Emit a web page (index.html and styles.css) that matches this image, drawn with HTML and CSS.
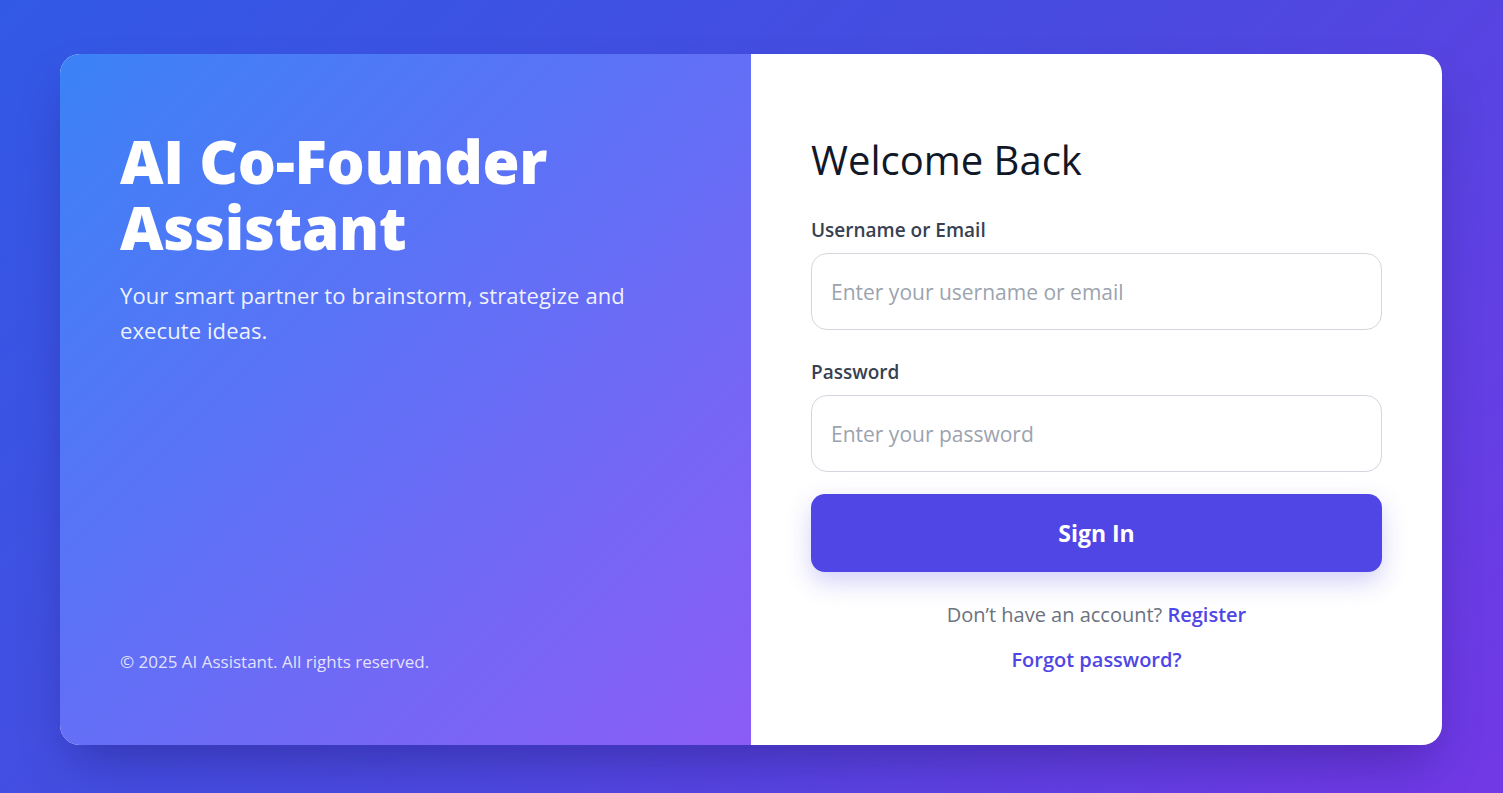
FILE: index.html
```html
<!DOCTYPE html>
<html lang="en">
<head>
<meta charset="utf-8">
<title>AI Co-Founder Assistant</title>
<link rel="stylesheet" href="styles.css">
</head>
<body>
<main class="page">
  <section class="card">
    <div class="hero">
      <div class="hero-top">
        <h1 class="hero-title">AI Co-Founder Assistant</h1>
        <p class="hero-sub">Your smart partner to brainstorm, strategize and execute ideas.</p>
      </div>
      <p class="hero-foot">© 2025 AI Assistant. All rights reserved.</p>
    </div>
    <div class="panel">
      <form class="form">
        <h2 class="form-title">Welcome Back</h2>
        <label class="field">
          <span class="field-label">Username or Email</span>
          <input class="field-input" type="text" placeholder="Enter your username or email">
        </label>
        <label class="field field--last">
          <span class="field-label">Password</span>
          <input class="field-input" type="password" placeholder="Enter your password">
        </label>
        <button class="btn" type="button">Sign In</button>
        <p class="alt">Don’t have an account? <a class="link" href="#">Register</a></p>
        <p class="alt"><a class="link" href="#">Forgot password?</a></p>
      </form>
    </div>
  </section>
</main>
</body>
</html>
```
FILE: styles.css
```css
* { box-sizing: border-box; }
html, body { margin: 0; height: 100%; }
body {
  font-family: "Open Sans", "Noto Sans", sans-serif;
  background: linear-gradient(135deg, #3259e6 0%, #4a4ae0 50%, #7238e6 100%);
}
.page {
  height: 100vh;
  padding: 6px 0 0 60px;
  display: flex;
  align-items: center;
  justify-content: flex-start;
}
.card {
  width: 1382px;
  height: 691px;
  display: grid;
  grid-template-columns: 1fr 1fr;
  border-radius: 20px;
  overflow: hidden;
  background: #fff;
  box-shadow: 0 25px 50px -12px rgba(20, 10, 80, 0.35);
}
.hero {
  background: linear-gradient(135deg, #3b82f6 0%, #8b5cf6 100%);
  color: #fff;
  padding: 74px 60px 72px;
  display: flex;
  flex-direction: column;
  justify-content: space-between;
}
.hero-title {
  margin: 0;
  font-size: 60px;
  font-weight: 800;
  line-height: 66px;
  letter-spacing: -0.3px;
}
.hero-sub {
  margin: 18px 0 0;
  font-size: 22px;
  line-height: 35px;
  letter-spacing: 0.1px;
  color: rgba(255, 255, 255, 0.92);
  max-width: 540px;
}
.hero-foot {
  margin: 0;
  font-size: 17px;
  color: rgba(255, 255, 255, 0.82);
}
.panel {
  padding: 80px 60px 40px;
  display: flex;
  flex-direction: column;
}
.form { display: flex; flex-direction: column; }
.form-title {
  margin: 0 0 31px;
  font-size: 40px;
  font-weight: 400;
  color: #111827;
  line-height: 52px;
}
.field { display: flex; flex-direction: column; margin-bottom: 29px; }
.field--last { margin-bottom: 22px; }
.field-label {
  font-size: 19px;
  line-height: 26px;
  font-weight: 600;
  color: #374151;
  margin-bottom: 10px;
}
.field-input {
  height: 77px;
  border: 1px solid #d6d6de;
  border-radius: 16px;
  padding: 0 19px;
  font-family: inherit;
  font-size: 21px;
  color: #111827;
  outline: none;
  background: #fff;
}
.field-input::placeholder { color: #9ca3af; }
.btn {
  height: 78px;
  border: 0;
  border-radius: 14px;
  background: #4f46e5;
  color: #fff;
  font-family: inherit;
  font-size: 23px;
  font-weight: 700;
  box-shadow: 0 10px 25px rgba(79, 70, 229, 0.25);
  margin-bottom: 29px;
}
.alt {
  margin: 0 0 18px;
  text-align: center;
  font-size: 20px;
  color: #6b7280;
}
.link { color: #4f46e5; text-decoration: none; font-weight: 600; }
```
